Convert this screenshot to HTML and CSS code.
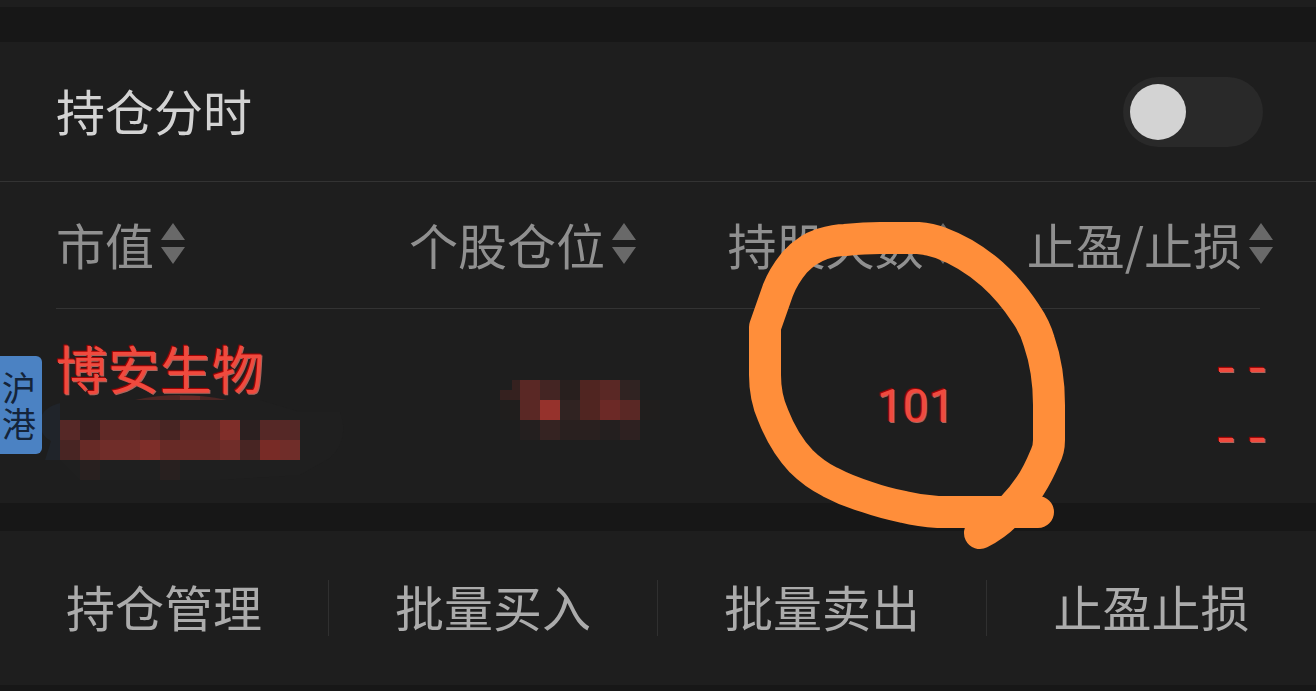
FILE: index.html
```html
<!DOCTYPE html>
<html lang="zh-CN">
<head>
<meta charset="utf-8">
<meta name="viewport" content="width=device-width, initial-scale=1">
<title>持仓</title>
<link rel="stylesheet" href="styles.css">
</head>
<body>
<main class="page">
  <section class="setting">
    <label class="setting-label" for="intraday">持仓分时</label>
    <input class="switch" type="checkbox" role="switch" id="intraday">
  </section>

  <section class="holdings">
    <table class="grid">
      <colgroup><col class="col-first"><col><col><col></colgroup>
      <thead>
        <tr>
          <th scope="col"><button class="sort" type="button">市值<svg class="arrows" viewBox="0 0 24 42" aria-hidden="true"><path d="M12 0 24 17H0ZM0 24H24L12 41Z"/></svg></button></th>
          <th scope="col"><button class="sort" type="button">个股仓位<svg class="arrows" viewBox="0 0 24 42" aria-hidden="true"><path d="M12 0 24 17H0ZM0 24H24L12 41Z"/></svg></button></th>
          <th scope="col"><button class="sort" type="button">持股天数<svg class="arrows" viewBox="0 0 24 42" aria-hidden="true"><path d="M12 0 24 17H0ZM0 24H24L12 41Z"/></svg></button></th>
          <th scope="col"><button class="sort" type="button">止盈/止损<svg class="arrows" viewBox="0 0 24 42" aria-hidden="true"><path d="M12 0 24 17H0ZM0 24H24L12 41Z"/></svg></button></th>
        </tr>
      </thead>
      <tbody>
        <tr>
          <td class="stock">
            <span class="name">博安生物</span>
            <svg class="mask-value" viewBox="56 404 260 76" aria-hidden="true">
              <path fill="#20242a" d="M60 403Q40 408 40 424Q41 436 51 441L45 460H60Z"/>
              <path fill="#1f1f1f" d="M60 400H260L300 412L340 412Q350 440 330 458L300 475L220 480H80L60 460Z"/>
              <path fill="#4a2523" d="M135 400Q180 390 227 400Z"/>
              <path fill="#652a27" d="M180 396H200V400H180Z"/>
              <g shape-rendering="crispEdges">
                <path fill="#552826" d="M60 420h20v20H60zM140 420h20v20h-20zM260 420h40v20h-40z"/>
                <path fill="#3d2020" d="M80 420h20v20H80z"/>
                <path fill="#602926" d="M100 420h40v20h-40zM180 420h40v20h-40z"/>
                <path fill="#482523" d="M160 420h20v20h-20zM60 440h20v20H60zM240 440h20v20h-20z"/>
                <path fill="#7e2e29" d="M220 420h20v20h-20zM140 440h20v20h-20z"/>
                <path fill="#2b2020" d="M240 420h20v20h-20z"/>
                <path fill="#672a26" d="M80 440h20v20H80zM160 440h60v20h-60z"/>
                <path fill="#702d29" d="M100 440h40v20h-40zM220 440h20v20h-20zM280 440h20v20h-20z"/>
                <path fill="#782b26" d="M260 440h20v20h-20z"/>
                <path fill="#28201f" d="M80 460h20v20H80zM160 460h20v20h-20z"/>
              </g>
            </svg>
          </td>
          <td class="ratio">
            <svg class="mask-ratio" viewBox="496 380 140 60" aria-hidden="true">
              <g shape-rendering="crispEdges">
                <path fill="#35211f" d="M512 380h8v20h-20v-10h12z"/>
                <path fill="#5a2825" d="M520 380h20v40h-20zM600 380h20v20h-20zM620 400h20v20h-20z"/>
                <path fill="#442523" d="M540 380h20v20h-20z"/>
                <path fill="#281f1e" d="M560 380h20v20h-20z"/>
                <path fill="#502521" d="M580 380h20v40h-20z"/>
                <path fill="#302322" d="M620 380h20v20h-20zM560 400h20v20h-20z"/>
                <path fill="#96322c" d="M540 400h20v20h-20z"/>
                <path fill="#6c2926" d="M600 400h20v20h-20z"/>
                <path fill="#201e1d" d="M500 400h20v20h-20zM640 400h20v20h-20z"/>
                <path fill="#241f1f" d="M520 420h20v20h-20zM600 420h20v20h-20z"/>
                <path fill="#352322" d="M540 420h20v20h-20z"/>
                <path fill="#29201f" d="M560 420h40v20h-40z"/>
                <path fill="#2e2121" d="M620 420h20v20h-20z"/>
              </g>
            </svg>
          </td>
          <td class="days">101</td>
          <td class="limits">--<br>--</td>
        </tr>
      </tbody>
    </table>
    <span class="market">沪港</span>
  </section>

  <nav class="actions">
    <button class="action" type="button">持仓管理</button>
    <button class="action" type="button">批量买入</button>
    <button class="action" type="button">批量卖出</button>
    <button class="action" type="button">止盈止损</button>
  </nav>

  <svg class="marker" viewBox="0 0 1316 691" width="1316" height="691" aria-hidden="true">
    <path d="M1038 512H938Q920 511 904 507Q884 503 867 497Q847 491 830 482Q814 474 801 461Q784 443 773 415Q765 397 765 375V327L778 290Q784 275 795 262Q807 249 822 244Q835 240 845 240Q865 238 880 238H918Q930 239 941 243Q968 253 992 274Q1011 291 1026 314Q1035 327 1039 341Q1049 370 1049 405V440Q1049 450 1045 457Q1038 474 1030 486Q1022 498 1012 508Q998 524 980 533"/>
  </svg>
</main>
</body>
</html>
```

FILE: styles.css
```css
* { box-sizing: border-box; }

body {
  margin: 0;
  background: #171717;
  color: #909090;
  font-family: "Noto Sans CJK SC", sans-serif;
  font-size: 49px;
  line-height: 72px;
}

button {
  padding: 0;
  border: 0;
  background: none;
  color: inherit;
  font: inherit;
  white-space: nowrap;
  cursor: pointer;
}

.page {
  position: relative;
  overflow: hidden;
  padding-bottom: 6px;
  border-top: 7px solid #1e1e1e;
}

.setting {
  display: flex;
  align-items: center;
  justify-content: space-between;
  margin-top: 35px;
  padding: 34px 53px 33px 56px;
  border-bottom: 1px solid #333;
  background: #1e1e1e;
}

.setting-label {
  padding-bottom: 4px;
  color: #d3d3d3;
  line-height: 68px;
}

.switch {
  appearance: none;
  width: 140px;
  height: 70px;
  margin: 0;
  padding: 7px;
  border-radius: 35px;
  background: #292929;
  cursor: pointer;
}

.switch::before {
  content: "";
  display: block;
  width: 56px;
  height: 56px;
  border-radius: 50%;
  background: #d3d3d3;
}

.switch:checked::before { margin-left: auto; }

.holdings {
  position: relative;
  padding: 0 43px 0 56px;
  background: #1e1e1e;
}

.grid {
  width: 100%;
  table-layout: fixed;
  border-collapse: collapse;
}

.col-first { width: 21.5%; }

.grid thead tr {
  background: linear-gradient(#333, #333) left bottom / calc(100% - 13px) 1px no-repeat;
}

.grid th {
  height: 127px;
  padding: 0 0 10px;
  font-weight: 400;
  text-align: right;
}

.grid th:first-child { text-align: left; }

.sort {
  display: inline-flex;
  align-items: center;
  gap: 7px;
  vertical-align: middle;
}

.arrows {
  width: 24px;
  height: 42px;
  fill: #696969;
}

.grid td {
  height: 194px;
  padding: 0;
  text-align: right;
  color: #f04a3e;
  text-shadow: -1px -1px 1px #b00000, 1px 1px 0 #a8655c;
}

.grid td.stock {
  padding-top: 23px;
  text-align: left;
  vertical-align: top;
}

.name {
  display: block;
  font-size: 52px;
}

.mask-value,
.mask-ratio {
  display: block;
  overflow: visible;
}

.mask-value {
  width: 260px;
  height: 76px;
}

.grid td.ratio { padding-top: 8px; }

.mask-ratio {
  width: 140px;
  height: 60px;
  margin-left: auto;
}

.grid td.days {
  font-family: Roboto, sans-serif;
  font-size: 46px;
}

.grid td.limits {
  font-family: "Liberation Mono", monospace;
  font-size: 52px;
  line-height: 70px;
}

.market {
  position: absolute;
  left: 0;
  bottom: 49px;
  width: 42px;
  padding: 13px 5px 13px 2px;
  border-radius: 0 6px 6px 0;
  background: #4b82c3;
  color: #14243a;
  font-size: 34px;
  line-height: 36px;
  word-break: break-all;
}

.actions {
  display: grid;
  grid-template-columns: repeat(4, 1fr);
  margin-top: 28px;
  padding: 49px 0;
  background: #1e1e1e;
  color: #ababab;
}

.action {
  height: 56px;
  padding-bottom: 4px;
  border-right: 1px solid #303030;
  line-height: 52px;
}

.action:last-child { border-right: 0; }

.marker {
  position: absolute;
  top: -7px;
  left: 0;
  fill: none;
  stroke: #ff8e3a;
  stroke-width: 32px;
  stroke-linecap: round;
  stroke-linejoin: round;
  pointer-events: none;
}
```
